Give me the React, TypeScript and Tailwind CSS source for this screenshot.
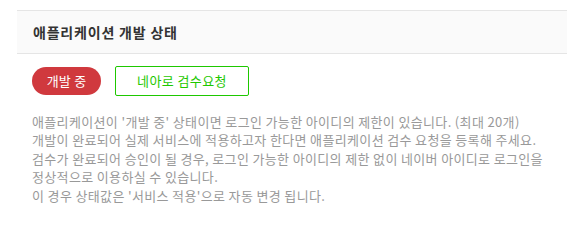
export default function App() {
  return (
    <div className="w-[583px] h-[227px] bg-white pt-[10px] pl-[17px] pr-[16px] font-['Noto_Sans_CJK_KR',sans-serif]">
      <div className="h-[44px] bg-[#fafafa] border-y border-[#e5e5e5] flex items-center pl-[16px]">
        <h2 className="text-[14px] font-bold text-[#333] tracking-[0.8px]">애플리케이션 개발 상태</h2>
      </div>
      <div className="flex items-center gap-[14px] mt-[12px] pl-[15px]">
        <span className="h-[28px] w-[69px] rounded-full bg-[#d0393e] text-white text-[13px] tracking-[0.2px] flex items-center justify-center">개발 중</span>
        <button className="h-[30px] w-[134px] border border-[#1ec800] rounded-[2px] text-[#1ec800] text-[13px] tracking-[0.4px] flex items-center justify-center">네아로 검수요청</button>
      </div>
      <div className="mt-[17px] pl-[15px] text-[13px] leading-[18.4px] text-[#999] tracking-[0.35px]">
        <p>애플리케이션이 '개발 중' 상태이면 로그인 가능한 아이디의 제한이 있습니다. (최대 20개)</p>
        <p>개발이 완료되어 실제 서비스에 적용하고자 한다면 애플리케이션 검수 요청을 등록해 주세요.</p>
        <p>검수가 완료되어 승인이 될 경우, 로그인 가능한 아이디의 제한 없이 네이버 아이디로 로그인을</p>
        <p>정상적으로 이용하실 수 있습니다.</p>
        <p>이 경우 상태값은 '서비스 적용'으로 자동 변경 됩니다.</p>
      </div>
    </div>
  );
}
